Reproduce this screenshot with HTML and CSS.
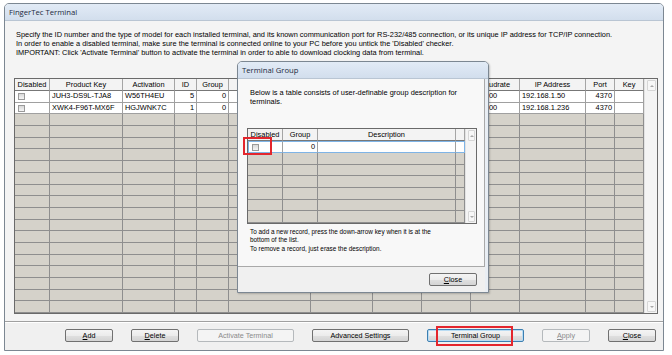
FILE: index.html
```html
<!DOCTYPE html>
<html lang="en">
<head>
  <meta charset="UTF-8">
  <title>FingerTec Terminal</title>
  <link rel="stylesheet" href="styles.css">
</head>
<body>
  <!-- Main window -->
  <div class="window">
    <div class="titlebar">FingerTec Terminal</div>
    <div class="client">
      <div class="panel">
        <div class="info">
          <p>Specify the ID number and the type of model for each installed terminal, and its known communication port for RS-232/485 connection, or its unique IP address for TCP/IP connection.</p>
          <p>In order to enable a disabled terminal, make sure the terminal is connected online to your PC before you untick the 'Disabled' checker.</p>
          <p>IMPORTANT: Click 'Activate Terminal' button to activate the terminal in order to able to download clocking data from terminal.</p>
        </div>

        <div class="grid main-grid">
          <table>
            <colgroup>
              <col class="w35"><col class="w73"><col class="w52"><col class="w22"><col class="w32"><col class="w82"><col class="w62"><col class="w49"><col class="w49"><col class="w49"><col class="w66"><col class="w29"><col class="w29">
            </colgroup>
            <thead>
              <tr><th>Disabled</th><th>Product Key</th><th>Activation</th><th>ID</th><th>Group</th><th>Model</th><th>Connection</th><th>Comm Port</th><th>Comm Key</th><th>Baudrate</th><th>IP Address</th><th>Port</th><th>Key</th></tr>
            </thead>
            <tbody>
              <tr class="filled"><td><span class="check"></span></td><td>JUH3-DS9L-TJA8</td><td>W56TH4EU</td><td class="num">5</td><td class="num">0</td><td></td><td></td><td></td><td></td><td>115200</td><td>192.168.1.50</td><td class="num">4370</td><td></td></tr>
              <tr class="filled"><td><span class="check"></span></td><td>XWK4-F96T-MX6F</td><td>HGJWNK7C</td><td class="num">1</td><td class="num">0</td><td></td><td></td><td></td><td></td><td>115200</td><td>192.168.1.236</td><td class="num">4370</td><td></td></tr>
              <tr><td></td><td></td><td></td><td></td><td></td><td></td><td></td><td></td><td></td><td></td><td></td><td></td><td></td></tr>
              <tr><td></td><td></td><td></td><td></td><td></td><td></td><td></td><td></td><td></td><td></td><td></td><td></td><td></td></tr>
              <tr><td></td><td></td><td></td><td></td><td></td><td></td><td></td><td></td><td></td><td></td><td></td><td></td><td></td></tr>
              <tr><td></td><td></td><td></td><td></td><td></td><td></td><td></td><td></td><td></td><td></td><td></td><td></td><td></td></tr>
              <tr><td></td><td></td><td></td><td></td><td></td><td></td><td></td><td></td><td></td><td></td><td></td><td></td><td></td></tr>
              <tr><td></td><td></td><td></td><td></td><td></td><td></td><td></td><td></td><td></td><td></td><td></td><td></td><td></td></tr>
              <tr><td></td><td></td><td></td><td></td><td></td><td></td><td></td><td></td><td></td><td></td><td></td><td></td><td></td></tr>
              <tr><td></td><td></td><td></td><td></td><td></td><td></td><td></td><td></td><td></td><td></td><td></td><td></td><td></td></tr>
              <tr><td></td><td></td><td></td><td></td><td></td><td></td><td></td><td></td><td></td><td></td><td></td><td></td><td></td></tr>
              <tr><td></td><td></td><td></td><td></td><td></td><td></td><td></td><td></td><td></td><td></td><td></td><td></td><td></td></tr>
              <tr><td></td><td></td><td></td><td></td><td></td><td></td><td></td><td></td><td></td><td></td><td></td><td></td><td></td></tr>
              <tr><td></td><td></td><td></td><td></td><td></td><td></td><td></td><td></td><td></td><td></td><td></td><td></td><td></td></tr>
              <tr><td></td><td></td><td></td><td></td><td></td><td></td><td></td><td></td><td></td><td></td><td></td><td></td><td></td></tr>
              <tr><td></td><td></td><td></td><td></td><td></td><td></td><td></td><td></td><td></td><td></td><td></td><td></td><td></td></tr>
              <tr><td></td><td></td><td></td><td></td><td></td><td></td><td></td><td></td><td></td><td></td><td></td><td></td><td></td></tr>
              <tr><td></td><td></td><td></td><td></td><td></td><td></td><td></td><td></td><td></td><td></td><td></td><td></td><td></td></tr>
              <tr><td></td><td></td><td></td><td></td><td></td><td></td><td></td><td></td><td></td><td></td><td></td><td></td><td></td></tr>
            </tbody>
          </table>
          <div class="vscroll">
            <div class="sb-btn"><span class="arrow-up"></span></div>
            <div class="sb-btn"><span class="arrow-down"></span></div>
          </div>
        </div>
      </div>

      <div class="footer">
        <button class="btn w48"><u>A</u>dd</button>
        <button class="btn w48"><u>D</u>elete</button>
        <button class="btn w97" disabled>Activate Terminal</button>
        <button class="btn w97">Advanced Settings</button>
        <button class="btn w97 focused">Terminal Group</button>
        <button class="btn w48" disabled><u>A</u>pply</button>
        <button class="btn w48"><u>C</u>lose</button>
      </div>
    </div>
  </div>

  <!-- Terminal Group dialog -->
  <div class="dialog">
    <div class="titlebar">Terminal Group</div>
    <div class="dialog-panel">
      <p class="lead">Below is a table consists of user-definable group description for<br>terminals.</p>

      <div class="grid group-grid">
        <table>
          <colgroup>
            <col class="w35"><col class="w35"><col class="w138"><col class="w9">
          </colgroup>
          <thead>
            <tr><th>Disabled</th><th>Group</th><th>Description</th><th></th></tr>
          </thead>
          <tbody>
            <tr class="filled current"><td class="cur-cell"><span class="check"></span></td><td class="num">0</td><td></td><td></td></tr>
            <tr><td></td><td></td><td></td><td></td></tr>
            <tr><td></td><td></td><td></td><td></td></tr>
            <tr><td></td><td></td><td></td><td></td></tr>
            <tr><td></td><td></td><td></td><td></td></tr>
            <tr><td></td><td></td><td></td><td></td></tr>
            <tr><td></td><td></td><td></td><td></td></tr>
          </tbody>
        </table>
        <div class="vscroll">
          <div class="sb-btn"><span class="arrow-up"></span></div>
          <div class="sb-btn"><span class="arrow-down"></span></div>
        </div>
      </div>

      <p class="hint">To add a new record, press the down-arrow key when it is at the<br>bottom of the list.<br>To remove a record, just erase the description.</p>
    </div>
    <div class="dialog-footer">
      <button class="btn w48"><u>C</u>lose</button>
    </div>
    <div class="mark mark-cell"></div>
  </div>

  <div class="mark mark-button"></div>
</body>
</html>
```

FILE: styles.css
```css
:root {
  --face: #f0f0f0;
  --panel: #f4f4f4;
  --frame-line: #7c8792;
  --grid-line: #8e8e8e;
  --grid-empty: #d5d2ca;
  --header-bg: #f3f3f3;
  --cell-blue: #7fb4e6;
  --focus-blue: #3c7fb1;
  --mark-red: #e3262d;
  --text: #000000;
  --muted: #8a8a8a;
}

* {
  box-sizing: border-box;
}

body {
  margin: 0;
  background: #ffffff;
  font-family: "Liberation Sans", Arial, sans-serif;
  font-size: 7.4px;
  color: var(--text);
}

p {
  margin: 0;
}

/* window chrome */

.window {
  margin: 3px 0 0 4px;
  width: 660px;
  height: 348px;
  border: 1px solid var(--frame-line);
  border-radius: 5px 5px 0 0;
  background: var(--face);
  display: flex;
  flex-direction: column;
}

.titlebar {
  height: 17px;
  padding-left: 4px;
  line-height: 16px;
  font-family: "Open Sans", sans-serif;
  font-size: 7.7px;
  color: #1c2a3c;
  background: linear-gradient(#e2ebf6, #d2deed);
  border-bottom: 1px solid #b9c5d3;
  border-radius: 4px 4px 0 0;
}

.client {
  flex: 1;
  display: flex;
  flex-direction: column;
}

.panel {
  height: 301px;
  padding: 9px 0 0 9px;
  background: var(--panel);
  border-bottom: 1px solid #a0a0a0;
}

.info {
  margin-left: 2px;
  line-height: 9px;
}

.footer {
  flex: 1;
  display: flex;
  justify-content: flex-end;
  gap: 18px;
  padding: 6px 7px 0 0;
  border-top: 1px solid #ffffff;
}

/* grids */

.grid {
  display: flex;
  border: 1px solid #6a6a6a;
  background: #f6f6f6;
}

.main-grid {
  width: 644px;
  margin-top: 21px;
}

.grid table {
  border-collapse: separate;
  border-spacing: 0;
  table-layout: fixed;
}

.grid th,
.grid td {
  height: 11.7px;
  padding: 0 2px;
  line-height: 10px;
  font-weight: normal;
  white-space: nowrap;
  overflow: hidden;
  border-right: 1px solid var(--grid-line);
  border-bottom: 1px solid var(--grid-line);
  background: var(--grid-empty);
  text-align: left;
}

.grid th {
  height: 12px;
  text-align: center;
  background: var(--header-bg);
  border-right-color: #a5a5a5;
  border-bottom-color: #777777;
}

.grid tr.filled td {
  background: #ffffff;
  border-right-color: #a0a0a0;
  border-bottom-color: #a0a0a0;
}

.grid td.num {
  text-align: right;
}

.check {
  display: block;
  width: 7px;
  height: 7px;
  border: 1px solid #9a9a9a;
  background: linear-gradient(#d8d8d8, #f6f6f6);
  margin-left: 1px;
}

.vscroll {
  flex: 1;
  display: flex;
  flex-direction: column;
  justify-content: space-between;
  padding: 1px 1px 1px 2px;
  background: #f4f4f4;
  border-left: 1px solid #e2e2e2;
}

.sb-btn {
  height: 11px;
  display: flex;
  align-items: center;
  justify-content: center;
  border: 1px solid #d6d6d6;
  border-radius: 1px;
  background: #f7f7f7;
}

.arrow-up,
.arrow-down {
  width: 0;
  height: 0;
  border-left: 2.5px solid transparent;
  border-right: 2.5px solid transparent;
}

.arrow-up {
  border-bottom: 2.5px solid #a8a8a8;
}

.arrow-down {
  border-top: 2.5px solid #a8a8a8;
}

.w9 { width: 9px; }
.w22 { width: 22px; }
.w29 { width: 29px; }
.w32 { width: 32px; }
.w35 { width: 35px; }
.w48 { width: 48px; }
.w49 { width: 49px; }
.w52 { width: 52px; }
.w62 { width: 62px; }
.w66 { width: 66px; }
.w73 { width: 73px; }
.w82 { width: 82px; }
.w97 { width: 97px; }
.w138 { width: 138px; }

/* buttons */

.btn {
  height: 13px;
  padding: 0;
  border: 1px solid #707070;
  border-radius: 2px;
  background: linear-gradient(#f4f4f4 0%, #ececec 50%, #e0e0e0 51%, #d4d4d4 100%);
  font-family: "Liberation Sans", Arial, sans-serif;
  font-size: 7.2px;
  line-height: 10px;
  color: var(--text);
}

.btn u {
  text-decoration-thickness: 1px;
  text-underline-offset: 1px;
}

.btn:disabled {
  border-color: #b5b9bc;
  background: #f4f4f4;
  color: var(--muted);
}

.btn.focused {
  border-color: var(--focus-blue);
  box-shadow: inset 0 0 0 1px #b9dcf3;
}

/* dialog */

.dialog {
  position: absolute;
  left: 237px;
  top: 61px;
  width: 252px;
  height: 232px;
  border: 1px solid var(--frame-line);
  border-radius: 5px 5px 0 0;
  background: #e9eef4;
  display: flex;
  flex-direction: column;
  box-shadow: 1px 1px 2px rgba(0, 0, 0, 0.2);
}

.dialog-panel {
  height: 188px;
  margin-right: 3px;
  padding: 9px 0 0 9px;
  background: #f8f8f8;
  border-right: 1px solid #a9a9a9;
  border-bottom: 1px solid #a9a9a9;
}

.lead {
  margin-left: 3px;
  line-height: 9px;
}

.group-grid {
  width: 230px;
  margin-top: 22px;
}

.group-grid tr.current td {
  border-top: 1px solid var(--cell-blue);
  border-bottom-color: var(--cell-blue);
  height: 11.7px;
}

.group-grid tr.current td:nth-child(4) {
  border-right-color: var(--cell-blue);
}

.group-grid td.cur-cell {
  border: 1px solid var(--cell-blue);
}

.hint {
  margin: 4px 0 0 3px;
  font-size: 6.4px;
  line-height: 8.3px;
}

.dialog-footer {
  flex: 1;
  display: flex;
  justify-content: flex-end;
  margin-right: 3px;
  padding: 6px 8px 0 0;
  background: var(--face);
}

/* red call-out boxes */

.mark {
  position: absolute;
  border: 2px solid var(--mark-red);
}

.mark-cell {
  left: 5px;
  top: 75px;
  width: 29px;
  height: 18px;
}

.mark-button {
  left: 436px;
  top: 326px;
  width: 77px;
  height: 20px;
}
```
